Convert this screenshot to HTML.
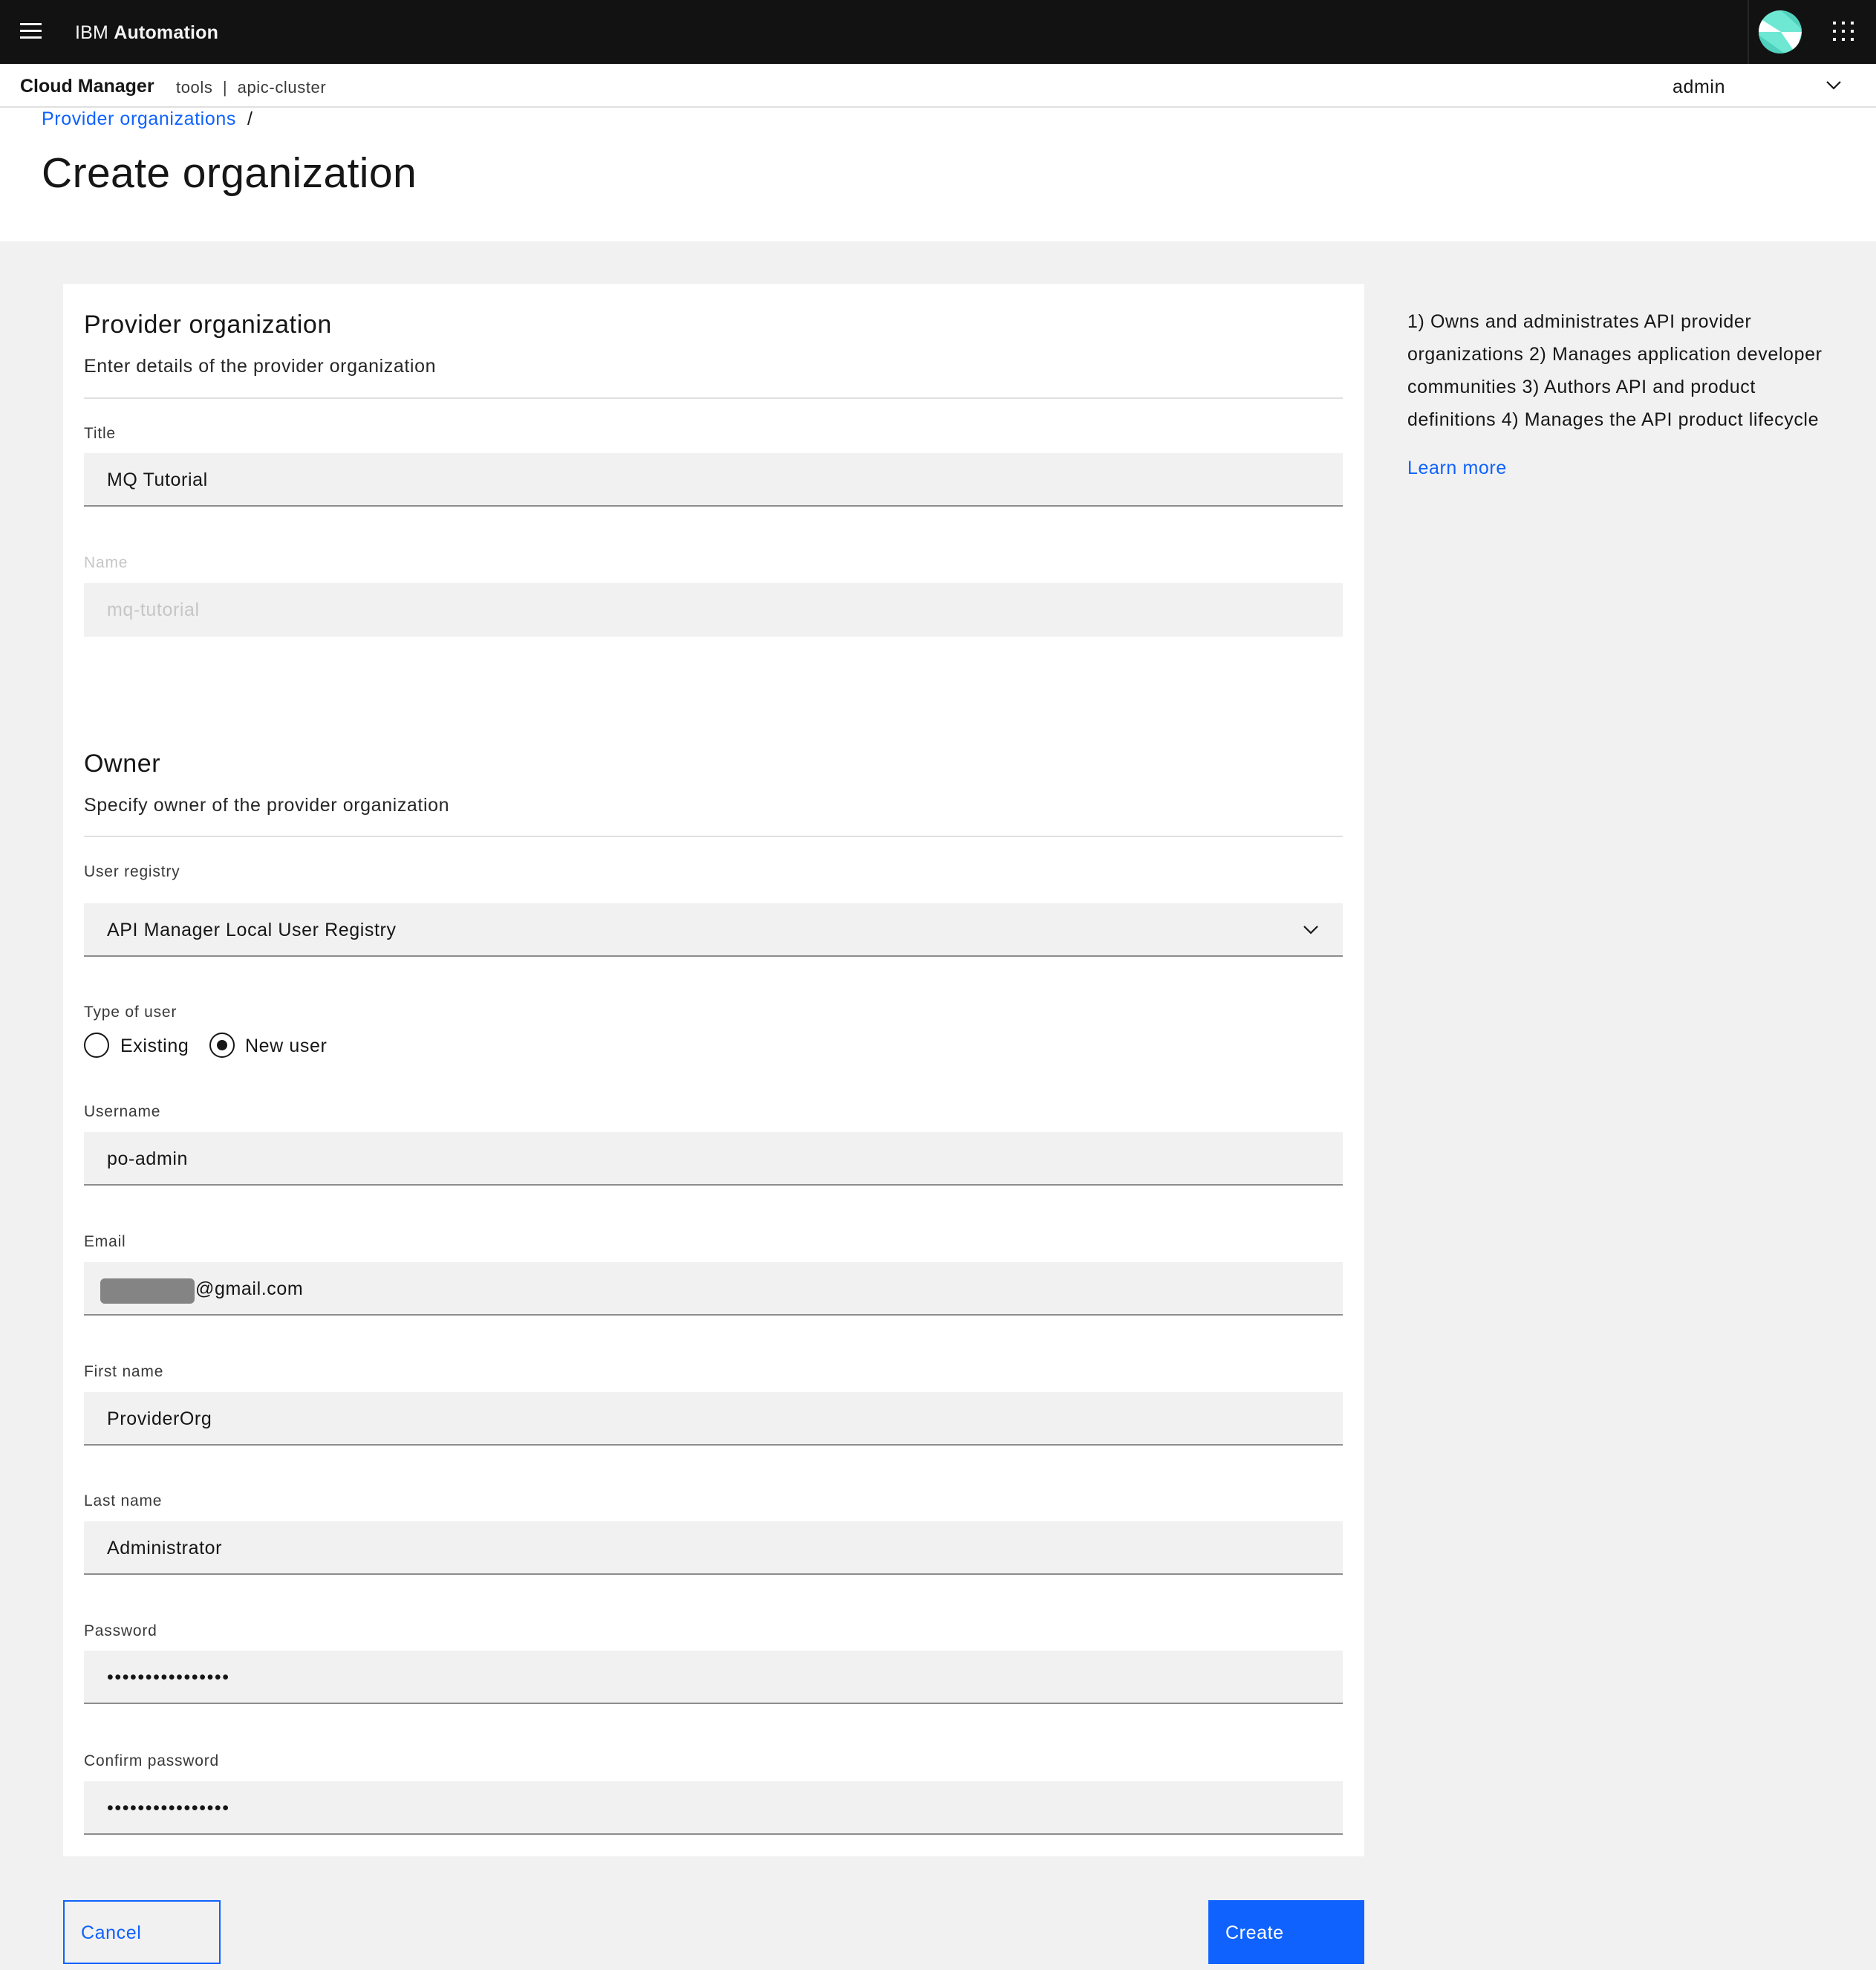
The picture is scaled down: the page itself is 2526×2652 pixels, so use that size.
<!DOCTYPE html>
<html><head><meta charset="utf-8"><style>
*{margin:0;padding:0;box-sizing:border-box}
body{width:2526px;height:2652px;background:#f1f1f1;font-family:"Liberation Sans",sans-serif;color:#161616;position:relative;overflow:hidden;letter-spacing:.6px}
.a{position:absolute;white-space:nowrap}
.lbl{font-size:21px;color:#393939;letter-spacing:.8px}
.inp{position:absolute;left:113px;width:1695px;height:72px;background:#f1f1f1;border-bottom:2px solid #8d8d8d;font-size:25px;padding-left:31px;line-height:72px}
.h{font-size:34px}
.sub{font-size:25px;color:#262626}
.div{position:absolute;left:113px;width:1695px;height:2px;background:#e0e0e0}
.pw{letter-spacing:1.6px;font-size:25px}
</style></head><body>
<div class="a" style="left:0;top:0;width:2526px;height:86px;background:#121212"></div>
<div class="a" style="left:27px;top:31px;width:29px;height:3px;background:#f4f4f4"></div>
<div class="a" style="left:27px;top:40px;width:29px;height:3px;background:#f4f4f4"></div>
<div class="a" style="left:27px;top:49px;width:29px;height:3px;background:#f4f4f4"></div>
<div class="a" style="left:101px;top:30px;font-size:25px;color:#f4f4f4;letter-spacing:.2px">IBM <b>Automation</b></div>
<div class="a" style="left:2353px;top:0;width:2px;height:86px;background:#262626"></div>
<svg class="a" style="left:2368px;top:14px" width="58" height="58" viewBox="0 0 58 58"><clipPath id="c"><circle cx="29" cy="29" r="29"/></clipPath><g clip-path="url(#c)"><rect width="58" height="58" fill="#6fe8d3"/><polygon points="0,10 30,29 0,29" fill="#fff"/><polygon points="30,29 58,29 50,58" fill="#fff"/><polygon points="30,0 58,0 58,25" fill="#4fd1bd"/><polygon points="0,33 35,58 0,58" fill="#4fd1bd"/></g></svg>
<svg class="a" style="left:2468px;top:29px" width="30" height="30"><g fill="#f4f4f4"><rect x="0" y="0" width="4" height="4"/><rect x="12" y="0" width="4" height="4"/><rect x="24" y="0" width="4" height="4"/><rect x="0" y="11" width="4" height="4"/><rect x="12" y="11" width="4" height="4"/><rect x="24" y="11" width="4" height="4"/><rect x="0" y="22" width="4" height="4"/><rect x="12" y="22" width="4" height="4"/><rect x="24" y="22" width="4" height="4"/></g></svg>
<div class="a" style="left:0;top:86px;width:2526px;height:239px;background:#fff"></div>
<div class="a" style="left:0;top:143px;width:2526px;height:2px;background:#e0e0e0"></div>
<div class="a" style="left:27px;top:102px;font-size:25px;font-weight:bold;letter-spacing:0">Cloud Manager</div>
<div class="a" style="left:237px;top:105px;font-size:22px;color:#393939">tools &nbsp;|&nbsp; apic-cluster</div>
<div class="a" style="left:2252px;top:103px;font-size:25px">admin</div>
<svg class="a" style="left:2458px;top:108px" width="22" height="14"><path d="M2 2 L11 11 L20 2" fill="none" stroke="#161616" stroke-width="2.2"/></svg>
<div class="a" style="left:56px;top:146px;font-size:25px;color:#0f62fe">Provider organizations <span style="color:#161616">&nbsp;/</span></div>
<div class="a" style="left:56px;top:200px;font-size:57px;font-weight:300;letter-spacing:.4px">Create organization</div>
<div class="a" style="left:85px;top:382px;width:1752px;height:2117px;background:#fff"></div>
<div class="a h" style="left:113px;top:418px">Provider organization</div>
<div class="a sub" style="left:113px;top:479px">Enter details of the provider organization</div>
<div class="div" style="top:535px"></div>
<div class="a lbl" style="left:113px;top:572px">Title</div>
<div class="inp" style="top:610px">MQ Tutorial</div>
<div class="a lbl" style="left:113px;top:746px;color:#c6c6c6">Name</div>
<div class="inp" style="top:785px;border-bottom:none;color:#c6c6c6">mq-tutorial</div>
<div class="a h" style="left:113px;top:1009px">Owner</div>
<div class="a sub" style="left:113px;top:1070px">Specify owner of the provider organization</div>
<div class="div" style="top:1125px"></div>
<div class="a lbl" style="left:113px;top:1162px">User registry</div>
<div class="inp" style="top:1216px">API Manager Local User Registry</div>
<svg class="a" style="left:1754px;top:1245px" width="22" height="14"><path d="M2 2 L11 11 L20 2" fill="none" stroke="#161616" stroke-width="2.2"/></svg>
<div class="a lbl" style="left:113px;top:1351px">Type of user</div>
<div class="a" style="left:113px;top:1390px;width:34px;height:34px;border:2px solid #161616;border-radius:50%"></div>
<div class="a" style="left:162px;top:1394px;font-size:25px">Existing</div>
<div class="a" style="left:282px;top:1390px;width:34px;height:34px;border:2px solid #161616;border-radius:50%"></div>
<div class="a" style="left:292px;top:1400px;width:14px;height:14px;background:#161616;border-radius:50%"></div>
<div class="a" style="left:330px;top:1394px;font-size:25px">New user</div>
<div class="a lbl" style="left:113px;top:1485px">Username</div>
<div class="inp" style="top:1524px">po-admin</div>
<div class="a lbl" style="left:113px;top:1660px">Email</div>
<div class="inp" style="top:1699px;padding-left:135px"></div>
<div class="a" style="left:135px;top:1721px;width:127px;height:34px;background:#848484;border-radius:6px"></div>
<div class="a" style="left:263px;top:1721px;font-size:25px">@gmail.com</div>
<div class="a lbl" style="left:113px;top:1835px">First name</div>
<div class="inp" style="top:1874px">ProviderOrg</div>
<div class="a lbl" style="left:113px;top:2009px">Last name</div>
<div class="inp" style="top:2048px">Administrator</div>
<div class="a lbl" style="left:113px;top:2184px">Password</div>
<div class="inp pw" style="top:2222px">••••••••••••••••</div>
<div class="a lbl" style="left:113px;top:2359px">Confirm password</div>
<div class="inp pw" style="top:2398px">••••••••••••••••</div>
<div class="a" style="left:1895px;top:411px;font-size:25px;line-height:44px;white-space:normal;width:560px">1) Owns and administrates API provider organizations 2) Manages application developer communities 3) Authors API and product definitions 4) Manages the API product lifecycle</div>
<div class="a" style="left:1895px;top:616px;font-size:25px;color:#0f62fe">Learn more</div>
<div class="a" style="left:85px;top:2558px;width:212px;height:86px;border:2px solid #0f62fe;color:#0f62fe;font-size:25px;padding:28px 0 0 22px">Cancel</div>
<div class="a" style="left:1627px;top:2558px;width:210px;height:86px;background:#0f62fe;color:#fff;font-size:25px;padding:30px 0 0 23px">Create</div>
</body></html>
